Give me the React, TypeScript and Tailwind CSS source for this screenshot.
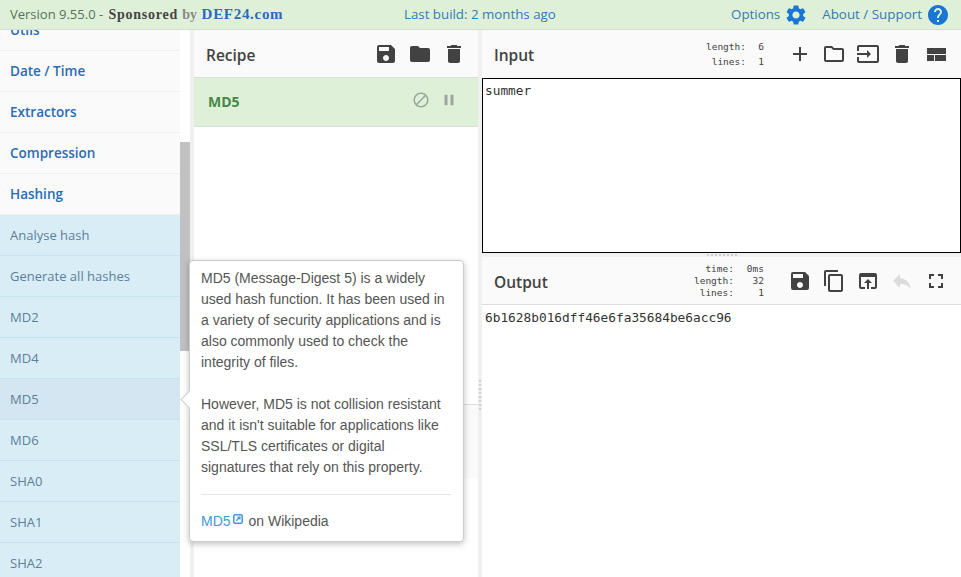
import { MdAdd, MdBlock, MdContentCopy, MdDelete, MdFolder, MdFullscreen, MdHelp, MdInput, MdOpenInBrowser, MdOutlineFolder, MdPause, MdReply, MdSave, MdSettings } from 'react-icons/md';

const CATEGORIES = ['Utils', 'Date / Time', 'Extractors', 'Compression', 'Hashing'];
const OPERATIONS = ['Analyse hash', 'Generate all hashes', 'MD2', 'MD4', 'MD5', 'MD6', 'SHA0', 'SHA1', 'SHA2'];

const ICON_BTN = 'text-[#424242] shrink-0';

function LayoutIcon() {
  return (
    <svg width="24" height="24" viewBox="0 0 24 24" className="shrink-0 fill-[#424242]">
      <rect x="3" y="6" width="19" height="6" />
      <rect x="3" y="13" width="7" height="6" />
      <rect x="11" y="13" width="11" height="6" />
    </svg>
  );
}

function ExternalIcon() {
  return (
    <svg width="10" height="10" viewBox="0 0 10 10" className="mx-[2px] -mt-[6px] inline-block fill-none stroke-[#3d9bd9]">
      <rect x="0.8" y="0.8" width="8.4" height="8.4" rx="1.2" strokeWidth="1.5" />
      <path d="M3.2 6.8 L6.8 3.2 M4.4 3.1 H6.9 V5.6" strokeWidth="1.3" />
    </svg>
  );
}

function Sidebar() {
  return (
    <div className="flex w-[190px] shrink-0 overflow-hidden bg-white">
      <div className="w-[180px] shrink-0 -mt-[20px]">
        {CATEGORIES.map((name) => (
          <div key={name} className="flex h-[41px] items-center border-b border-[#eeeeee] bg-[#fafafa] pl-[10px] text-[13.5px] font-semibold text-[#2a6bb5]">
            {name}
          </div>
        ))}
        {OPERATIONS.map((name) => (
          <div
            key={name}
            className={`flex h-[41px] items-center border-b border-[#c4e3f0] pl-[10px] pt-[2px] text-[13px] text-[#5d7f99] ${name === 'MD5' ? 'bg-[#d3e6f1]' : 'bg-[#d9edf7]'}`}
          >
            {name}
          </div>
        ))}
      </div>
      {/* Scrollbar */}
      <div className="w-[10px] shrink-0 pt-[112px]">
        <div className="h-[209px] bg-[#c1c1c1]" />
      </div>
    </div>
  );
}

function Recipe() {
  return (
    <div className="flex w-[284px] shrink-0 flex-col bg-white">
      <div className="flex h-[48px] items-center justify-between border-b border-[#dddddd] bg-[#fafafa] pl-[12px] pr-[12px]">
        <span className="mt-[5px] text-[15.5px] font-semibold text-[#424242]">Recipe</span>
        <div className="flex items-center gap-[10px]">
          <MdSave size={24} className={ICON_BTN} />
          <MdFolder size={24} className={ICON_BTN} />
          <MdDelete size={24} className={ICON_BTN} />
        </div>
      </div>
      <div className="flex h-[49px] items-center justify-between border-b border-[#dddddd] bg-[#dff0d8] pl-[14px] pr-[20px]">
        <span className="-mt-[2px] text-[14px] font-bold text-[#468847]">MD5</span>
        <div className="-mt-[4px] flex items-center gap-[10px]">
          <MdBlock size={18} className="text-[#9ba59b]" />
          <MdPause size={18} className="text-[#9ba59b]" />
        </div>
      </div>
      <div className="h-[277px]" />
      <div className="h-[74px] border-t border-[#dddddd] bg-[#fafafa]" />
    </div>
  );
}

function Stats({ rows, leading, valueWidth }: { rows: [string, string][]; leading: string; valueWidth: string }) {
  return (
    <div className={`font-['DejaVu_Sans_Mono',monospace] text-[9.5px] text-[#424242] ${leading}`}>
      {rows.map(([label, value]) => (
        <div key={label} className="flex justify-end whitespace-pre">
          <span>{label}</span>
          <span className={`text-right ${valueWidth}`}>{value}</span>
        </div>
      ))}
    </div>
  );
}

function IoPanels() {
  return (
    <div className="flex min-w-0 flex-1 flex-col bg-white">
      {/* Input */}
      <div className="flex h-[48px] items-center bg-[#fafafa] pl-[12px] pr-[13px]">
        <span className="mt-[4px] text-[15.5px] font-semibold text-[#424242]">Input</span>
        <div className="ml-auto mr-[24px] -mt-[1px]">
          <Stats rows={[['length:', '6'], ['lines:', '1']]} leading="leading-[15px]" valueWidth="w-[18px]" />
        </div>
        <div className="flex items-center gap-[10px]">
          <MdAdd size={24} className={ICON_BTN} />
          <MdOutlineFolder size={24} className={ICON_BTN} />
          <MdInput size={24} className={ICON_BTN} />
          <MdDelete size={24} className={ICON_BTN} />
          <LayoutIcon />
        </div>
      </div>
      <div className="h-[175px] border border-black bg-white pl-[2px] pt-[2px] font-['DejaVu_Sans_Mono',monospace] text-[12.8px] leading-[19px] text-[#333333]">
        summer
      </div>
      {/* Horizontal gutter */}
      <div className="flex h-[4px] justify-center bg-[#f0f0f0] pt-[1px]">
        <div className="h-[2px] w-[30px] border-t-2 border-dotted border-[#cfcfcf]" />
      </div>
      {/* Output */}
      <div className="flex h-[48px] items-center border-b border-[#dddddd] bg-[#fafafa] pl-[12px] pr-[13px]">
        <span className="mt-[4px] text-[15.5px] font-semibold text-[#424242]">Output</span>
        <div className="ml-auto mr-[24px]">
          <Stats rows={[['time:', '0ms'], ['length:', '32'], ['lines:', '1']]} leading="leading-[12px]" valueWidth="w-[30px]" />
        </div>
        <div className="flex items-center gap-[10px]">
          <MdSave size={24} className={ICON_BTN} />
          <MdContentCopy size={24} className={ICON_BTN} />
          <MdOpenInBrowser size={24} className={ICON_BTN} />
          <MdReply size={24} className="shrink-0 text-[#dcdcdc]" />
          <MdFullscreen size={24} className={ICON_BTN} />
        </div>
      </div>
      <div className="pl-[3px] pt-[3px] font-['DejaVu_Sans_Mono',monospace] text-[12.8px] leading-[19px] text-[#333333]">
        6b1628b016dff46e6fa35684be6acc96
      </div>
    </div>
  );
}

function Popover() {
  return (
    <div className="absolute left-[189px] top-[260px] h-[282px] w-[275px] rounded-[4px] border border-[#cccccc] bg-white pl-[11px] pr-[12px] pt-[7px] font-['Liberation_Sans',sans-serif] text-[14px] leading-[21px] text-[#555555] shadow-[0_2px_6px_rgba(0,0,0,0.25)]">
      <div className="absolute -left-[7px] top-[132px] h-[13px] w-[13px] rotate-45 border-b border-l border-[#cccccc] bg-white" />
      <p>MD5 (Message-Digest 5) is a widely used hash function. It has been used in a variety of security applications and is also commonly used to check the integrity of files.</p>
      <p className="mt-[21px]">However, MD5 is not collision resistant and it isn't suitable for applications like SSL/TLS certificates or digital signatures that rely on this property.</p>
      <div className="mt-[16px] border-t border-[#e5e5e5] pt-[16px]">
        <span className="text-[#3d9bd9]">MD5</span>
        <ExternalIcon />
        <span> on Wikipedia</span>
      </div>
    </div>
  );
}

export default function App() {
  return (
    <div className="relative flex h-[577px] w-[961px] flex-col overflow-hidden bg-[#f0f0f0] font-['Open_Sans',sans-serif]">
      {/* Banner */}
      <div className="relative flex h-[30px] shrink-0 items-center border-b border-[#d5dcd2] bg-[#dff0d8] pl-[10px] pr-[11px] text-[13.3px]">
        <div className="flex w-[394px] items-baseline whitespace-pre">
          <span className="text-[13px] text-[#56705c]">Version 9.55.0 - </span>
          <span className="ml-[2px] font-['Liberation_Serif',serif] text-[14px] font-bold tracking-[0.75px] text-[#444444]">Sponsored </span>
          <span className="font-['Liberation_Serif',serif] text-[14px] font-bold text-[#888888]">by </span>
          <span className="ml-[1px] font-['Liberation_Serif',serif] text-[15px] font-bold tracking-[0.7px] text-[#2a6bb5]">DEF24.com</span>
        </div>
        <span className="text-[#337ab7]">Last build: 2 months ago</span>
        <div className="ml-auto flex items-center text-[#337ab7]">
          <span>Options</span>
          <MdSettings size={24} className="ml-[4px] text-[#1976d2]" />
          <span className="ml-[14px] text-[13.4px]">About / Support</span>
          <MdHelp size={24} className="ml-[4px] text-[#1976d2]" />
        </div>
      </div>

      <div className="flex min-h-0 flex-1 gap-[4px]">
        <Sidebar />
        <Recipe />
        <IoPanels />
      </div>

      {/* Vertical gutter grip */}
      <div className="absolute left-[479px] top-[380px] h-[30px] w-[2px] border-l-2 border-dotted border-[#cfcfcf]" />

      <Popover />
    </div>
  );
}
